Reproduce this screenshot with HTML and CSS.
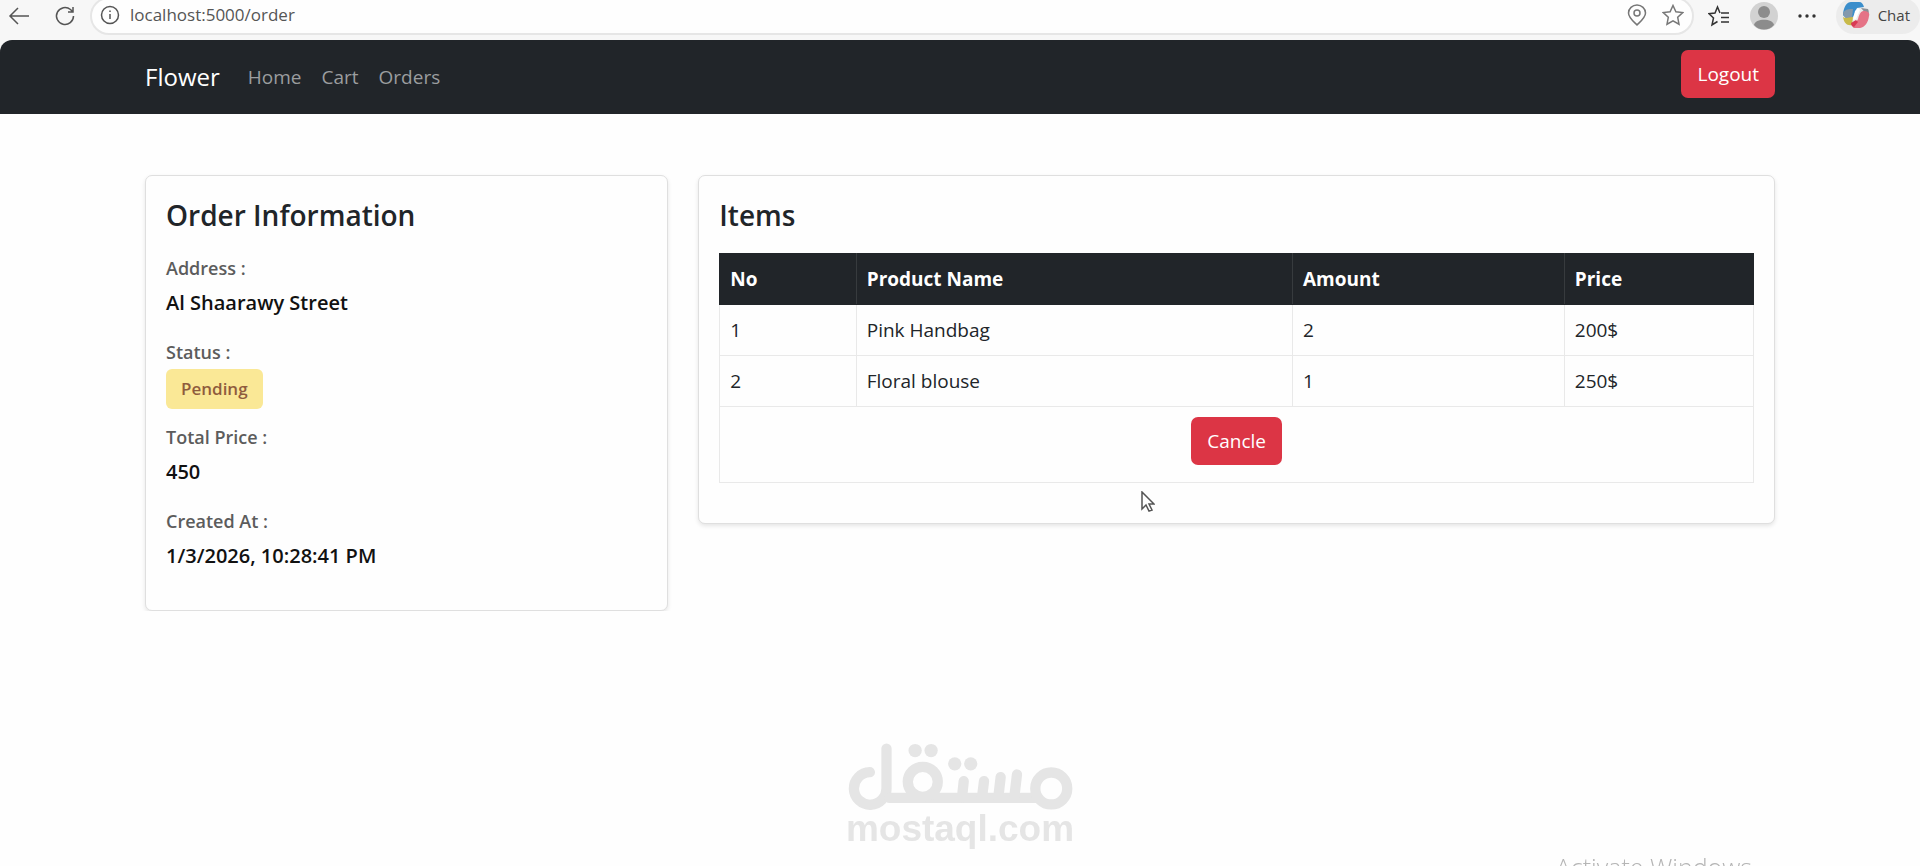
FILE: index.html
```html
<!DOCTYPE html>
<html lang="en">
<head>
    <meta charset="UTF-8">
    <meta name="viewport" content="width=device-width, initial-scale=1.0">
    <title>Order</title>
    <link rel="stylesheet" href="styles.css">
</head>
<body>
    <div class="browser-bar">
        <button class="icon-btn" type="button" aria-label="Back">
            <svg width="22" height="22" viewBox="0 0 22 22"><path d="M21 11H2M10 3L2 11l8 8"/></svg>
        </button>
        <button class="icon-btn reload" type="button" aria-label="Reload">
            <svg width="22" height="22" viewBox="0 0 22 22"><path d="M19.500 11a8.500 8.500 0 1 1-3-6.500l2 2M19 2v5h-5"/></svg>
        </button>
        <div class="address-bar">
            <svg width="20" height="20" viewBox="0 0 20 20"><circle cx="10" cy="10" r="8.500"/><path d="M10 9v5M10 5.500v1.500"/></svg>
            <input class="url" type="text" value="localhost:5000/order" aria-label="Address bar">
            <button class="icon-btn" type="button" aria-label="Location">
                <svg width="22" height="22" viewBox="0 0 22 22"><path d="M11 21C7 17 2.500 13.500 2.500 9a8.500 8 0 0 1 17 0c0 4.500-4.500 8-8.500 12z"/><circle cx="11" cy="9" r="3"/></svg>
            </button>
            <button class="icon-btn" type="button" aria-label="Add to favorites">
                <svg width="22" height="22" viewBox="0 0 22 22"><path d="M11 1.500l2.900 6.300 6.800.8-5 4.700 1.300 6.900-6-3.400-6 3.400 1.300-6.900-5-4.700 6.800-.8z"/></svg>
            </button>
        </div>
        <div class="browser-actions">
            <button class="icon-btn dark" type="button" aria-label="Favorites">
                <svg width="22" height="22" viewBox="0 0 22 22"><path d="M12 8l-2.500-6L7 8l-6 .7 4.500 4.300L4 20l5.500-3.500M13 8h8M13 12.500h8M13 17h8"/></svg>
            </button>
            <button class="icon-btn" type="button" aria-label="Profile">
                <svg class="avatar" width="28" height="28" viewBox="0 0 28 28"><circle cx="14" cy="14" r="14" fill="#d2d2d2"/><circle cx="14" cy="10" r="6" fill="#8c8c8c"/><path d="M4 23c1-7 19-7 20 0-5 6-15 6-20 0z" fill="#8c8c8c"/></svg>
            </button>
            <button class="icon-btn" type="button" aria-label="More">
                <svg class="dots" width="18" height="18" viewBox="0 0 18 18"><circle cx="2" cy="9" r="1.700"/><circle cx="9" cy="9" r="1.700"/><circle cx="16" cy="9" r="1.700"/></svg>
            </button>
        </div>
        <button class="chat-btn" type="button">
            <svg width="28" height="28" viewBox="0 0 28 28">
                <path d="M1 13C2 5 5 1 9 1h8c3 0 4 2 5 5l-7 1-4 9H5c-3 0-4-1-4-3z" fill="#3b8ecb"/>
                <path d="M1 12c2-4 6-4 10-4l-1 9c-3 3-8 1-9-5z" fill="#8499ad"/>
                <path d="M1 16c3 2 6 0 10 0l-1 8c-5 1-8-2-9-8z" fill="#c8ba4a"/>
                <path d="M19 7l7 1c1 2 1 4 0 7z" fill="#8a8f96"/>
                <path d="M21 10c5 0 7 2 6 5-1 7-4 11-9 12h-7l5-9c1-4 2-7 5-8z" fill="#e57386"/>
                <path d="M9 22l5-3 2 2-4 5c-2 0-3-2-3-4z" fill="#d83b54"/>
                <path d="M16 7l2 2-4 9-3 1 2-9z" fill="#fff"/>
            </svg>
            Chat
        </button>
    </div>

    <nav class="navbar">
        <div class="container nav-content">
            <a class="brand" href="#">Flower</a>
            <ul class="nav-links">
                <li><a href="#">Home</a></li>
                <li><a href="#">Cart</a></li>
                <li><a href="#">Orders</a></li>
            </ul>
            <button class="btn logout" type="button">Logout</button>
        </div>
    </nav>

    <main class="container">
        <div class="row">
            <div class="col-4">
                <div class="card">
                    <h4>Order Information</h4>
                    <div class="info">
                        <p class="label">Address :</p>
                        <p class="value">Al Shaarawy Street</p>
                    </div>
                    <div class="info status">
                        <p class="label">Status :</p>
                        <span class="badge">Pending</span>
                    </div>
                    <div class="info">
                        <p class="label">Total Price :</p>
                        <p class="value">450</p>
                    </div>
                    <div class="info">
                        <p class="label">Created At :</p>
                        <p class="value">1/3/2026, 10:28:41 PM</p>
                    </div>
                </div>
            </div>
            <div class="col-8">
                <div class="card">
                    <h4>Items</h4>
                    <table class="items">
                        <thead>
                            <tr>
                                <th class="col-no">No</th>
                                <th class="col-name">Product Name</th>
                                <th class="col-amount">Amount</th>
                                <th>Price</th>
                            </tr>
                        </thead>
                        <tbody>
                            <tr>
                                <td>1</td>
                                <td>Pink Handbag</td>
                                <td>2</td>
                                <td>200$</td>
                            </tr>
                            <tr>
                                <td>2</td>
                                <td>Floral blouse</td>
                                <td>1</td>
                                <td>250$</td>
                            </tr>
                            <tr>
                                <td class="actions" colspan="4"><button class="btn" type="button">Cancle</button></td>
                            </tr>
                        </tbody>
                    </table>
                </div>
            </div>
        </div>
    </main>

    <div class="watermark">
        <svg width="225" height="67" viewBox="80 44 676 200" role="img" aria-label="مستقل">
            <g fill="none" stroke="#e5e5e5" stroke-width="31" stroke-linecap="round">
                <path d="M196 60V178A49 49 0 1 1 146 131"/>
                <path d="M205 208H645"/>
                <circle cx="305" cy="160" r="45"/>
                <circle cx="691" cy="180" r="48"/>
                <path d="M428 158l-5 48M489 158l-6 48M539 146l-7 60M588 138l-8 68"/>
            </g>
            <g fill="#e5e5e5">
                <circle cx="282" cy="66" r="20"/>
                <circle cx="330" cy="66" r="20"/>
                <circle cx="401" cy="106" r="20"/>
                <circle cx="449" cy="106" r="20"/>
            </g>
        </svg>
        <span>mostaql.com</span>
    </div>

    <div class="activate">Activate Windows</div>

    <svg class="cursor" width="14" height="22" viewBox="0 0 14 22"><path d="M1 1v17l4-4 3 6 3-1-3-6h5z" fill="#fff" stroke="#555" stroke-width="1.500"/></svg>
</body>
</html>
```
FILE: styles.css
```css
* {
    box-sizing: border-box;
}

body {
    font-family: 'Segoe UI', 'Open Sans', 'Noto Sans', sans-serif;
    font-size: 19px;
    line-height: 30px;
    margin: 0;
    color: #212529;
    background-color: #fefefe;
}

h4, p, ul {
    margin: 0;
    padding: 0;
}

button {
    font-family: inherit;
    cursor: pointer;
}

/* Browser bar */
.browser-bar {
    display: flex;
    align-items: center;
    height: 52px;
    padding: 0 0 20px 8px;
    background-color: #f7f7f7;
}

.browser-bar svg {
    display: block;
    fill: none;
    stroke: #555;
    stroke-width: 1.5;
}

.icon-btn {
    padding: 0;
    border: none;
    background: none;
}

.icon-btn.reload {
    margin: 0 14px 0 24px;
}

.icon-btn.dark svg {
    stroke: #333;
}

.browser-bar .avatar, .browser-bar .chat-btn svg {
    stroke: none;
}

.browser-bar .dots {
    fill: #333;
    stroke: none;
}

.address-bar {
    flex: 1;
    display: flex;
    align-items: center;
    gap: 14px;
    height: 38px;
    padding: 0 8px 2px;
    border: 2px solid #e6e6e6;
    border-radius: 19px;
    background-color: #fefefe;
}

.address-bar .icon-btn svg {
    stroke: #777;
}

.url {
    flex: 1;
    margin-left: -4px;
    padding: 0 0 2px;
    border: none;
    outline: none;
    background: none;
    color: #555;
    font-family: inherit;
    font-size: 17px;
}

.browser-actions {
    display: flex;
    align-items: center;
    gap: 20px;
    padding: 0 20px 0 14px;
}

.chat-btn {
    display: flex;
    align-items: center;
    gap: 8px;
    height: 36px;
    padding: 0 10px 2px 6px;
    border: none;
    border-radius: 18px;
    background-color: #ececec;
    color: #444;
    font-size: 15px;
}

/* Navbar */
.navbar {
    margin-top: -12px;
    padding: 10px 0;
    border-radius: 12px 12px 0 0;
    background-color: #212529;
}

.container {
    max-width: 1660px;
    margin: 0 auto;
    padding: 0 15px;
}

.nav-content {
    display: flex;
    align-items: center;
    min-height: 54px;
}

.brand {
    margin-right: 28px;
    color: white;
    font-size: 24px;
    text-decoration: none;
}

.nav-links {
    display: flex;
    gap: 20px;
    list-style: none;
}

.nav-links a {
    color: #9b9d9f;
    text-decoration: none;
}

.btn {
    height: 48px;
    padding: 0 16px;
    border: none;
    border-radius: 7px;
    background-color: #dc3545;
    color: white;
    font-size: 19px;
}

.logout {
    align-self: flex-start;
    margin-left: auto;
}

/* Order page */
.row {
    display: flex;
    align-items: flex-start;
    margin: 61px -15px 0;
}

.col-4 {
    width: 33.33%;
    padding: 0 15px;
}

.col-8 {
    width: 66.67%;
    padding: 0 15px;
}

.card {
    padding: 20px;
    border: 1px solid #dfdfdf;
    border-radius: 7px;
    background-color: #fefefe;
    box-shadow: 0 2px 4px rgba(0, 0, 0, 0.1);
}

.card h4 {
    margin-bottom: 19px;
    font-size: 28px;
    font-weight: 600;
    line-height: 38px;
}

.info {
    margin-bottom: 19px;
}

.label {
    margin-bottom: 5px;
    color: #5c5c5c;
    font-size: 18px;
    font-weight: 600;
}

.value {
    color: #111;
    font-size: 20px;
    font-weight: 600;
}

.status {
    margin-bottom: 13px;
}

.status .label {
    margin-bottom: 2px;
}

.badge {
    display: block;
    width: fit-content;
    padding: 5px 15px;
    border-radius: 6px;
    background-color: #fae896;
    color: #8f5c3d;
    font-size: 17px;
    font-weight: 600;
}

.items {
    width: 100%;
    margin-bottom: 20px;
    border-collapse: collapse;
}

.items th, .items td {
    padding: 10px;
    border: 1px solid #e9e9e9;
    text-align: left;
}

.items th {
    border-color: #212529;
    border-right-color: #373b3e;
    background-color: #212529;
    color: white;
    font-weight: 700;
}

.items th:last-child {
    border-right-color: #212529;
}

.col-no {
    width: 13.2%;
}

.col-name {
    width: 42.2%;
}

.col-amount {
    width: 26.3%;
}

.items .actions {
    padding-bottom: 17px;
    text-align: center;
}

.actions .btn {
    display: block;
    margin: 0 auto;
}

/* Overlays */
.watermark {
    position: fixed;
    bottom: 18px;
    left: 50%;
    display: flex;
    flex-direction: column;
    align-items: center;
    transform: translateX(-50%);
    color: #e5e5e5;
    font-family: 'Liberation Sans', Arial, sans-serif;
    font-size: 37px;
    font-weight: 700;
    line-height: 38px;
}

.activate {
    position: fixed;
    right: 168px;
    bottom: -16px;
    color: #b5b5b5;
    font-size: 25px;
    font-weight: 300;
}

.cursor {
    position: absolute;
    top: 491px;
    left: 1141px;
}
```
